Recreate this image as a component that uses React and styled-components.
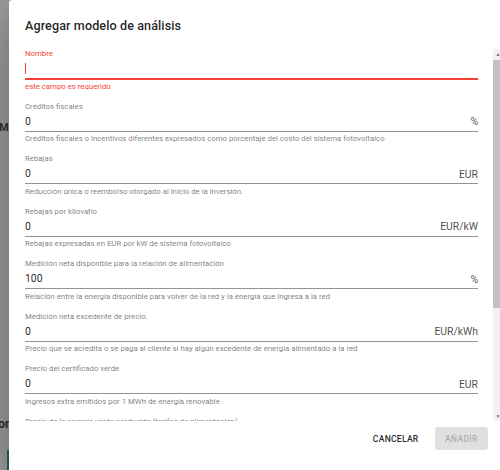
import React from "react";
import styled, { createGlobalStyle, css } from "styled-components";

const GlobalStyle = createGlobalStyle`
  html, body { margin: 0; padding: 0; height: 100%; overflow: hidden; }
  body {
    background: #9d9d9d;
    font-family: Roboto, "Liberation Sans", Arial, sans-serif;
  }
  #root { height: 100%; }
`;

const Screen = styled.div`
  display: flex;
  align-items: flex-start;
  width: 503px;
  height: 470px;
  overflow: hidden;
`;

const Behind = styled.div`
  width: 9px;
  flex: none;
  height: 470px;
  overflow: hidden;
  display: flex;
  flex-direction: column;
  background: #9d9d9d;
`;

const BehindText = styled.span`
  display: block;
  font-family: Roboto, "Liberation Sans", sans-serif;
  font-weight: 700;
  font-size: ${(p) => p.$size}px;
  line-height: ${(p) => p.$size}px;
  margin-top: ${(p) => p.$top}px;
  margin-left: ${(p) => p.$left}px;
  color: #2e2e2e;
  white-space: nowrap;
`;

const BehindBar = styled.div`
  width: 2px;
  height: 22px;
  margin-top: 20px;
  margin-left: 7px;
  background: #1f6a62;
`;

const Dialog = styled.div`
  width: 494px;
  flex: none;
  display: flex;
  flex-direction: column;
  background: #fff;
  border-radius: 3px;
  overflow: hidden;
  box-shadow: 0 11px 15px -7px rgba(0, 0, 0, 0.2),
    0 24px 38px 3px rgba(0, 0, 0, 0.14), 0 9px 46px 8px rgba(0, 0, 0, 0.12);
`;

const Title = styled.h2`
  flex: none;
  margin: 0;
  height: 49px;
  box-sizing: border-box;
  padding: 15px 16px 0;
  font-size: 12.6px;
  line-height: 21px;
  font-weight: 500;
  letter-spacing: 0.0075em;
  color: rgba(0, 0, 0, 0.87);
`;

const ContentFrame = styled.div`
  flex: none;
  height: 372px;
  display: flex;
`;

const Content = styled.div`
  flex: 1;
  min-width: 0;
  overflow: hidden;
  padding: 0 15px 0 16px;
  display: flex;
  flex-direction: column;
  gap: 10px;
`;

const ScrollBar = styled.div`
  width: 10px;
  flex: none;
  display: flex;
  flex-direction: column;
  background: #f1f1f1;
`;

const ScrollButton = styled.div`
  height: 10px;
  flex: none;
  display: flex;
  align-items: center;
  justify-content: center;
  color: #777;
  font-size: 5px;
  line-height: 1;
`;

const ScrollTrack = styled.div`
  flex: 1;
  display: flex;
  flex-direction: column;
`;

const ScrollThumb = styled.div`
  margin-top: 1px;
  height: 248px;
  background: #c1c1c1;
`;

const Field = styled.div`
  display: flex;
  flex-direction: column;
  flex: none;
`;

const Label = styled.label`
  display: block;
  height: 10px;
  font-size: 7.8px;
  line-height: 10px;
  white-space: nowrap;
  color: ${(p) => (p.$error ? "#f44336" : "rgba(0, 0, 0, 0.54)")};
`;

const InputRow = styled.div`
  display: flex;
  align-items: flex-start;
  height: 20px;
  box-sizing: border-box;
  border-bottom: 1px solid rgba(0, 0, 0, 0.42);
  ${(p) =>
    p.$error &&
    css`
      height: 21px;
      border-bottom-color: #f44336;
      box-shadow: inset 0 -1px 0 #f44336;
    `}
`;

const Caret = styled.span`
  display: block;
  width: 1px;
  height: 11px;
  margin-top: 4px;
  background: #f44336;
  flex: none;
`;

const Input = styled.input`
  flex: 1;
  min-width: 0;
  height: 19px;
  box-sizing: border-box;
  padding: 3.5px 0 3.3px;
  margin: 0;
  border: 0;
  outline: none;
  background: transparent;
  font-family: Roboto, "Liberation Sans", sans-serif;
  font-size: 10.4px;
  color: rgba(0, 0, 0, 0.87);
`;

const Unit = styled.span`
  flex: none;
  margin-left: 8px;
  padding-top: 3.5px;
  font-size: 10.4px;
  line-height: normal;
  color: rgba(0, 0, 0, 0.72);
  white-space: nowrap;
`;

const Helper = styled.p`
  margin: ${(p) => (p.$error ? "1.5px" : "2.5px")} 0 0;
  height: 10px;
  font-size: 7.8px;
  line-height: 10px;
  white-space: nowrap;
  color: ${(p) => (p.$error ? "#f44336" : "rgba(0, 0, 0, 0.54)")};
`;

const Actions = styled.div`
  display: flex;
  justify-content: flex-end;
  align-items: center;
  gap: 11px;
  padding: 6px 15px 24px;
  flex: none;
`;

const Button = styled.button`
  height: 23px;
  border: 0;
  border-radius: 3px;
  font-family: Roboto, "Liberation Sans", sans-serif;
  font-size: 8.6px;
  font-weight: 500;
  letter-spacing: 0.02857em;
  text-transform: uppercase;
  cursor: pointer;
  ${(p) =>
    p.$contained
      ? css`
          padding: 0 10.4px;
          background: rgba(0, 0, 0, 0.12);
          color: rgba(0, 0, 0, 0.26);
        `
      : css`
          padding: 0 5.2px;
          background: transparent;
          color: rgba(0, 0, 0, 0.87);
        `}
`;

const fields = [
  {
    label: "Créditos fiscales",
    value: "0",
    unit: "%",
    helper:
      "Créditos fiscales o incentivos diferentes expresados como porcentaje del costo del sistema fotovoltaico",
  },
  {
    label: "Rebajas",
    value: "0",
    unit: "EUR",
    helper: "Reducción única o reembolso otorgado al inicio de la inversión.",
  },
  {
    label: "Rebajas por kilovatio",
    value: "0",
    unit: "EUR/kW",
    helper: "Rebajas expresadas en EUR por kW de sistema fotovoltaico",
  },
  {
    label: "Medición neta disponible para la relación de alimentación",
    value: "100",
    unit: "%",
    helper:
      "Relación entre la energía disponible para volver de la red y la energía que ingresa a la red",
  },
  {
    label: "Medición neta excedente de precio.",
    value: "0",
    unit: "EUR/kWh",
    helper:
      "Precio que se acredita o se paga al cliente si hay algún excedente de energía alimentado a la red",
  },
  {
    label: "Precio del certificado verde",
    value: "0",
    unit: "EUR",
    helper: "Ingresos extra emitidos por 1 MWh de energía renovable",
  },
  {
    label: "Precio de la energía verde producida (tarifas de alimentación)",
    value: "0",
    unit: "EUR/kWh",
    helper: "Precio pagado por cada kWh de energía verde inyectada a la red",
  },
];

export default function App() {
  return (
    <>
      <GlobalStyle />
      <Screen>
        <Behind>
          <BehindText $size={11} $top={121.5} $left={-1}>M</BehindText>
          <BehindText $size={12.5} $top={285} $left={-2}>on</BehindText>
          <BehindBar />
        </Behind>
        <Dialog>
          <Title>Agregar modelo de análisis</Title>
          <ContentFrame>
            <Content>
              <Field>
                <Label $error>Nombre</Label>
                <InputRow $error>
                  <Caret />
                  <Input readOnly value="" />
                </InputRow>
                <Helper $error>este campo es requerido</Helper>
              </Field>
              {fields.map((f) => (
                <Field key={f.label}>
                  <Label>{f.label}</Label>
                  <InputRow>
                    <Input readOnly value={f.value} />
                    <Unit>{f.unit}</Unit>
                  </InputRow>
                  <Helper>{f.helper}</Helper>
                </Field>
              ))}
            </Content>
            <ScrollBar>
              <ScrollButton>▲</ScrollButton>
              <ScrollTrack>
                <ScrollThumb />
              </ScrollTrack>
              <ScrollButton>▼</ScrollButton>
            </ScrollBar>
          </ContentFrame>
          <Actions>
            <Button>Cancelar</Button>
            <Button $contained disabled>
              Añadir
            </Button>
          </Actions>
        </Dialog>
      </Screen>
    </>
  );
}
